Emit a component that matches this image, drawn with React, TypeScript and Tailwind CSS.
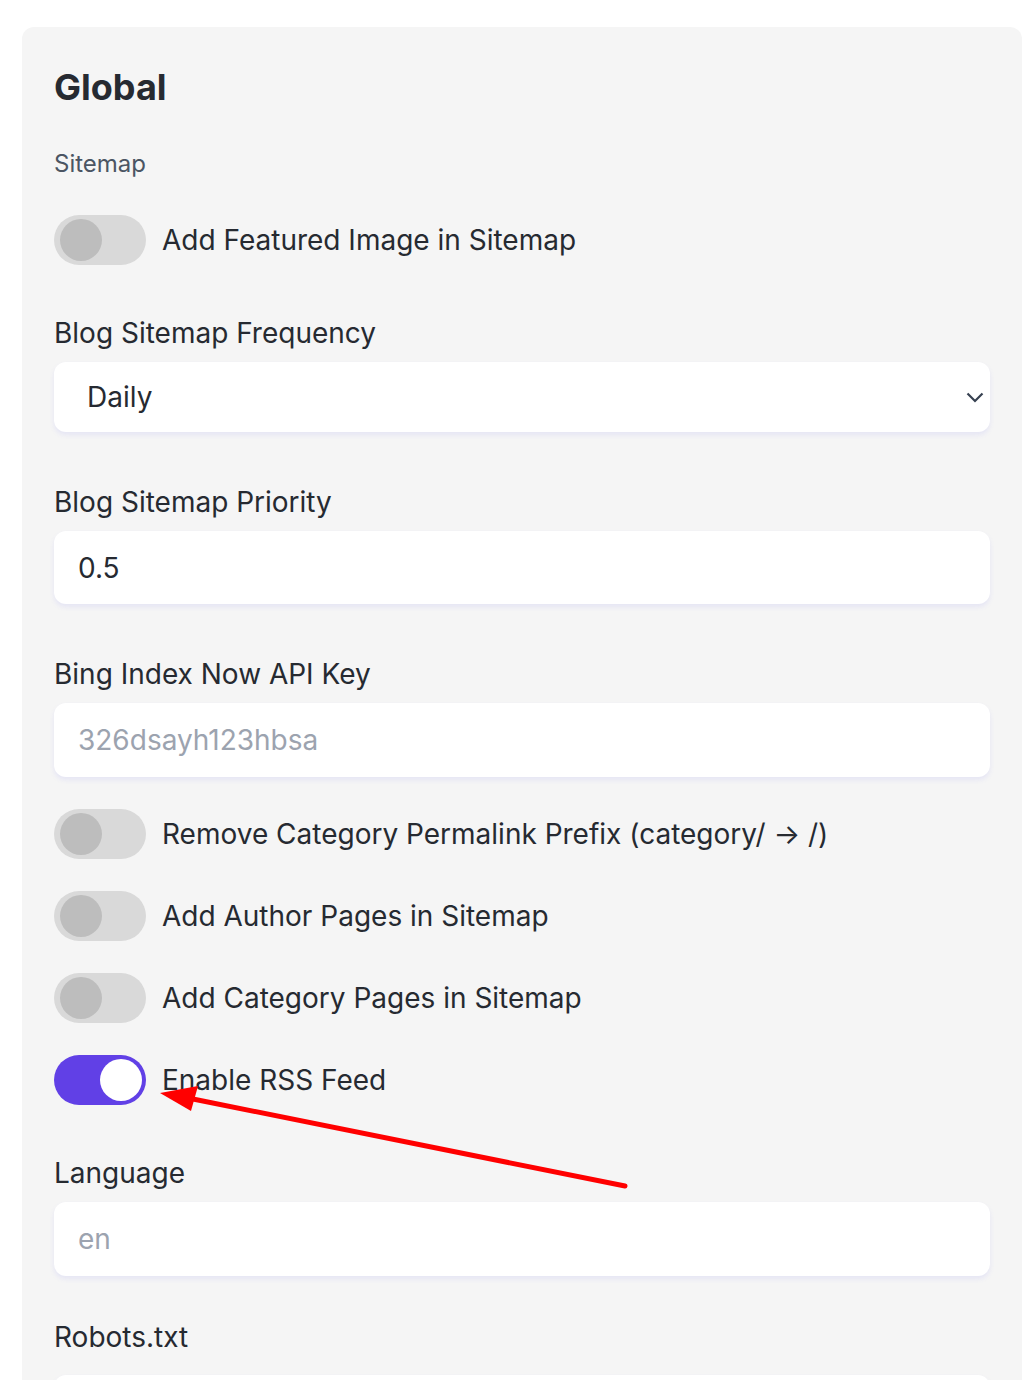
import { useState } from "react";

type ToggleProps = {
  label: string;
  on?: boolean;
  className?: string;
};

function Toggle({ label, on = false, className = "" }: ToggleProps) {
  const [checked, setChecked] = useState(on);
  return (
    <div className={`flex items-center gap-4 ${className}`}>
      <button
        type="button"
        role="switch"
        aria-checked={checked}
        onClick={() => setChecked(!checked)}
        className={`relative h-[50px] w-[92px] shrink-0 rounded-full ${
          checked ? "bg-[#6140e6]" : "bg-[#d9d9d9]"
        }`}
      >
        {checked ? (
          <span className="absolute right-[4px] top-[4px] size-[42px] rounded-full bg-white" />
        ) : (
          <span className="absolute left-[6px] top-[4px] size-[42px] rounded-full bg-[#bdbdbd]" />
        )}
      </button>
      <span className="text-[28px] leading-[34px] text-[#262a31]">{label}</span>
    </div>
  );
}

function Label({ children, className = "" }: { children: React.ReactNode; className?: string }) {
  return (
    <label className={`block text-[28px] leading-[34px] text-[#262a31] ${className}`}>
      {children}
    </label>
  );
}

const boxClass =
  "w-full rounded-xl bg-white text-[28px] text-[#262a31] outline-none shadow-[0_3px_5px_rgba(99,102,241,0.10)] placeholder:text-[#9ca3af]";

export default function App() {
  return (
    <div className="relative min-h-[1380px] bg-white pl-[22px] pt-[27px] font-['Inter',sans-serif]">
      <div className="flex w-[1000px] flex-col rounded-xl bg-[#f5f5f5] px-8 pb-10 pt-10">
        <h2 className="text-[36px] font-bold leading-[40px] text-[#262a31]">Global</h2>
        <p className="mt-[41px] text-[24px] leading-[32px] text-[#4b5563]">Sitemap</p>

        <Toggle className="mt-[35px]" label="Add Featured Image in Sitemap" />

        <Label className="mt-[51px]">Blog Sitemap Frequency</Label>
        <div className="relative mt-3">
          <select
            defaultValue="daily"
            className={`${boxClass} h-[70px] appearance-none pl-[33px] pr-12`}
          >
            <option value="daily">Daily</option>
            <option value="weekly">Weekly</option>
            <option value="monthly">Monthly</option>
          </select>
          <svg
            className="pointer-events-none absolute right-[6px] top-[30px]"
            width="18"
            height="11"
            viewBox="0 0 18 11"
            fill="none"
          >
            <polyline points="1.5,1.5 9,9 16.5,1.5" stroke="#374151" strokeWidth="2.2" />
          </svg>
        </div>

        <Label className="mt-[53px]">Blog Sitemap Priority</Label>
        <input className={`${boxClass} mt-3 h-[73px] px-6`} defaultValue="0.5" />

        <Label className="mt-[53px]">Bing Index Now API Key</Label>
        <input className={`${boxClass} mt-3 h-[74px] px-6`} placeholder="326dsayh123hbsa" />

        <Toggle className="mt-[32px]" label="Remove Category Permalink Prefix (category/ → /)" />
        <Toggle className="mt-[32px]" label="Add Author Pages in Sitemap" />
        <Toggle className="mt-[32px]" label="Add Category Pages in Sitemap" />
        <Toggle className="mt-[32px]" label="Enable RSS Feed" on />

        <Label className="mt-[51px]">Language</Label>
        <input className={`${boxClass} mt-3 h-[74px] px-6`} placeholder="en" />

        <Label className="mt-[44px]">Robots.txt</Label>
        <textarea className={`${boxClass} mt-[21px] h-[220px] resize-none px-6 py-5`} />
      </div>

      {/* annotation arrow */}
      <svg
        className="pointer-events-none absolute left-0 top-0"
        width="1022"
        height="1380"
        viewBox="0 0 1022 1380"
      >
        <line x1="625" y1="1186" x2="188" y2="1098" stroke="#ff0000" strokeWidth="5" strokeLinecap="round" />
        <polygon points="160,1093 198,1086 191,1111" fill="#ff0000" />
      </svg>
    </div>
  );
}
